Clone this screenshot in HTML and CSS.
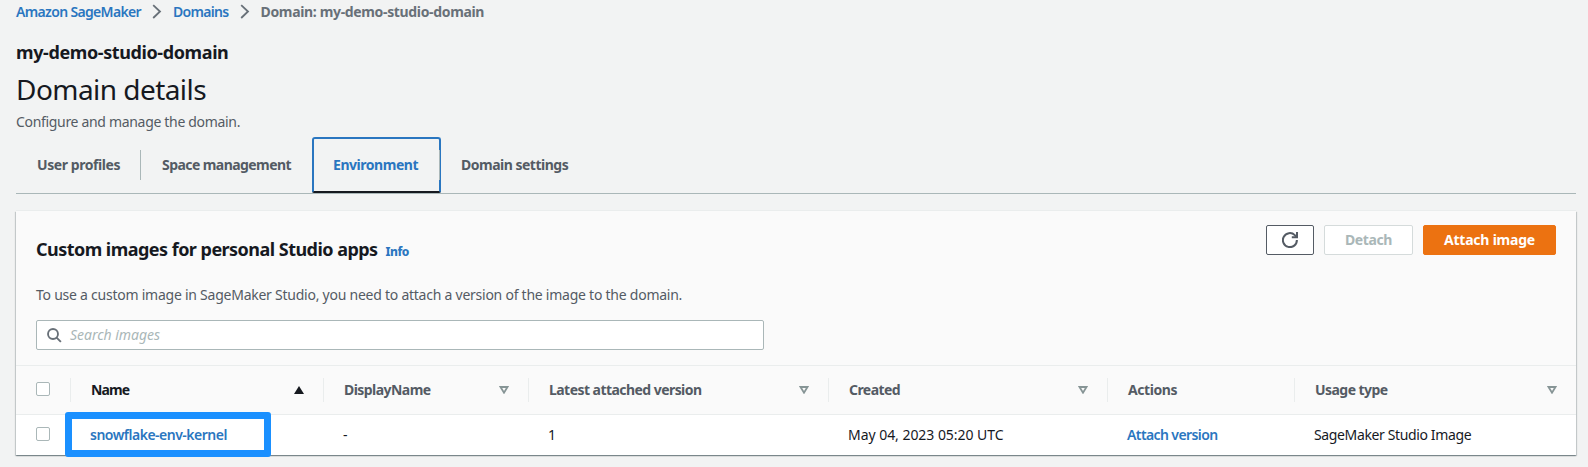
FILE: index.html
```
<!DOCTYPE html>
<html lang="en">
<head>
<meta charset="utf-8">
<title>Domain details</title>
<link rel="stylesheet" href="styles.css">
</head>
<body>
<nav class="breadcrumb">
  <a class="crumb" href="#">Amazon SageMaker</a>
  <svg class="chevron" viewBox="0 0 10 16"><path d="M1.2 1.2 8 7.5 1.2 14"/></svg>
  <a class="crumb crumb-short" href="#">Domains</a>
  <svg class="chevron" viewBox="0 0 10 16"><path d="M1.2 1.2 8 7.5 1.2 14"/></svg>
  <span class="crumb-current">Domain: my-demo-studio-domain</span>
</nav>
<header class="page-head">
  <h2 class="domain-name">my-demo-studio-domain</h2>
  <h1 class="page-title">Domain details</h1>
  <p class="page-desc">Configure and manage the domain.</p>
</header>
<div class="tabs">
  <div class="tab tab-profiles"><span>User profiles</span></div>
  <div class="tab tab-space"><span>Space management</span></div>
  <div class="tab tab-active"><span>Environment</span></div>
  <div class="tab tab-settings"><span>Domain settings</span></div>
</div>
<section class="panel">
  <div class="panel-head">
    <div class="title-row">
      <h2 class="panel-title">Custom images for personal Studio apps</h2>
      <a class="info" href="#">Info</a>
    </div>
    <div class="actions">
      <button class="btn btn-refresh" aria-label="Refresh"><svg class="refresh" viewBox="0 0 16 16"><path d="M14.9 8A7 7 0 1 1 12.8 3.1L15 5.2"/><path d="M15 0v5.3H9.8"/></svg></button>
      <button class="btn btn-detach">Detach</button>
      <button class="btn btn-attach">Attach image</button>
    </div>
  </div>
  <p class="panel-desc">To use a custom image in SageMaker Studio, you need to attach a version of the image to the domain.</p>
  <div class="search">
    <svg class="magnifier" viewBox="0 0 16 16"><circle cx="6.4" cy="6.4" r="5.3"/><path d="M10.2 10.2 14.8 14.8"/></svg>
    <span class="placeholder">Search images</span>
  </div>
  <div class="row row-head">
    <div class="cell check"><span class="checkbox"></span></div>
    <div class="cell sorted"><span class="t-name">Name</span><svg class="sort" viewBox="0 0 10 8"><path class="solid" d="M5 0 10 8H0Z"/></svg></div>
    <div class="cell"><span>DisplayName</span><svg class="sort" viewBox="0 0 10 8"><path class="hollow" d="M1.5 1h7L5 6.7Z"/></svg></div>
    <div class="cell"><span>Latest attached version</span><svg class="sort" viewBox="0 0 10 8"><path class="hollow" d="M1.5 1h7L5 6.7Z"/></svg></div>
    <div class="cell"><span>Created</span><svg class="sort" viewBox="0 0 10 8"><path class="hollow" d="M1.5 1h7L5 6.7Z"/></svg></div>
    <div class="cell"><span class="t-actions">Actions</span></div>
    <div class="cell last"><span>Usage type</span><svg class="sort" viewBox="0 0 10 8"><path class="hollow" d="M1.5 1h7L5 6.7Z"/></svg></div>
  </div>
  <div class="row row-body">
    <div class="cell check"><span class="checkbox"></span></div>
    <div class="cell marked"><a class="link" href="#">snowflake-env-kernel</a><span class="highlight"></span></div>
    <div class="cell">-</div>
    <div class="cell">1</div>
    <div class="cell t-date">May 04, 2023 05:20 UTC</div>
    <div class="cell"><a class="link t-attach" href="#">Attach version</a></div>
    <div class="cell t-usage">SageMaker Studio Image</div>
  </div>
</section>
</body>
</html>
```
FILE: styles.css
```
* { box-sizing: border-box; }
body {
  margin: 0;
  height: 467px;
  padding: 0 12px 0 16px;
  overflow: hidden;
  background: #f2f3f3;
  color: #16191f;
  font: 14px/20px "Noto Sans", "Open Sans", sans-serif;
}
h1, h2, p { margin: 0; }
a { color: #2a76c0; text-decoration: none; }
.breadcrumb { display: flex; align-items: center; height: 24px; white-space: nowrap; }
.crumb { font-weight: 600; letter-spacing: -0.66px; }
.crumb-short { letter-spacing: -0.69px; }
.crumb-current { font-weight: 700; color: #687078; letter-spacing: -0.34px; }
.chevron { width: 10px; height: 16px; margin: 0 11px; fill: none; stroke: #687078; stroke-width: 1.8; }
.page-head { padding-top: 16px; }
.domain-name { font-size: 18px; line-height: 24px; letter-spacing: -0.39px; }
.page-title { margin-top: 7px; font-size: 28px; line-height: 36px; font-weight: 400; letter-spacing: -0.55px; }
.page-desc { margin-top: 5px; color: #545b64; letter-spacing: -0.32px; }
.tabs { display: flex; width: 1560px; height: 57px; margin-top: 5px; border-bottom: 1px solid #aab7b8; }
.tab { display: flex; align-items: center; height: 56px; padding-bottom: 1px; font-weight: 700; color: #545b64; letter-spacing: -0.5px; white-space: nowrap; }
.tab-profiles { width: 125px; padding-left: 21px; letter-spacing: -0.43px; background: linear-gradient(#aab7b8, #aab7b8) right 13px / 1px 30px no-repeat; }
.tab-space { width: 171px; padding-left: 21px; letter-spacing: -0.57px; }
.tab-active { position: relative; width: 129px; padding-left: 19px; color: #2a76c0; border: 2px solid #2a76c0; border-bottom-color: #16191f; border-radius: 3px 3px 2px 2px; letter-spacing: -0.46px; }
.tab-active::after { content: ""; position: absolute; right: -1px; top: 11px; width: 1px; height: 30px; background: #aab7b8; }
.tab-settings { padding-left: 20px; }
.panel { width: 1560px; height: 244px; margin-top: 17px; background: #fafafa; box-shadow: 0 1px 1px 0 rgba(0, 28, 36, .3), 1px 1px 1px 0 rgba(0, 28, 36, .15), -1px 1px 1px 0 rgba(0, 28, 36, .15), 0 -1px 0 0 #eaeded; }
.panel-head { display: flex; justify-content: space-between; height: 71px; padding: 14px 20px 0; }
.title-row { display: flex; align-items: baseline; padding-top: 12px; }
.panel-title { font-size: 18px; line-height: 24px; letter-spacing: -0.53px; white-space: nowrap; }
.info { margin-left: 8px; font-size: 12px; font-weight: 800; letter-spacing: -0.5px; }
.actions { display: flex; gap: 10px; }
.btn { display: flex; align-items: center; justify-content: center; height: 30px; padding: 0 0 1px; border: 1px solid #545b64; border-radius: 2px; background: #fff; font: 700 14px/20px "Noto Sans", sans-serif; }
.btn-refresh { width: 48px; padding: 0; }
.btn-detach { width: 89px; border-color: #d5dbdb; color: #aab7b8; letter-spacing: -0.4px; }
.btn-attach { width: 133px; border-color: #ec7211; background: #ec7211; color: #fff; letter-spacing: -0.22px; }
.refresh { width: 16px; height: 16px; fill: none; stroke: #545b64; stroke-width: 2; }
.panel-desc { padding: 3px 20px 0; color: #545b64; letter-spacing: -0.245px; }
.search { display: flex; align-items: center; width: 728px; height: 30px; margin: 15px 0 0 20px; padding-left: 10px; border: 1px solid #aab7b8; border-radius: 2px; background: #fff; }
.magnifier { width: 15px; height: 15px; fill: none; stroke: #687078; stroke-width: 2; }
.placeholder { margin-left: 8px; padding-bottom: 1px; color: #aab7b8; font-style: italic; letter-spacing: -0.03px; }
.row { display: grid; grid-template-columns: 55px 253px 205px 300px 279px 187px 1fr; }
.row-head { height: 50px; margin-top: 15px; border-top: 1px solid #eaeded; border-bottom: 1px solid #eaeded; }
.row-body { height: 40px; background: #fff; }
.cell { display: flex; align-items: center; justify-content: space-between; padding-left: 20px; white-space: nowrap; }
.row-head .cell { padding-right: 20px; font-weight: 700; color: #545b64; letter-spacing: -0.55px; background: linear-gradient(#eaeded, #eaeded) right 12px / 1px 24px no-repeat; }
.row-head .last { padding-right: 19px; background: none; }
.row-head .sorted { color: #16191f; }
.row-head .t-name { letter-spacing: -0.85px; }
.row-head .t-actions { letter-spacing: -0.44px; }
.row-body .cell { padding-left: 19px; }
.row-head .check, .row-body .check { padding-left: 20px; }
.checkbox { width: 14px; height: 14px; margin-bottom: 2px; border: 1px solid #aab7b8; border-radius: 2px; background: #fff; }
.sort { width: 10px; height: 8px; }
.solid { fill: #16191f; }
.hollow { fill: none; stroke: #879596; stroke-width: 1.8; }
.link { font-weight: 600; letter-spacing: -0.5px; }
.t-attach { letter-spacing: -0.6px; }
.t-date { letter-spacing: -0.04px; }
.t-usage { letter-spacing: -0.37px; }
.marked { position: relative; }
.highlight { position: absolute; left: -6px; top: -3px; width: 206px; height: 45px; border: 7px solid #1a90ff; border-radius: 3px; }
```
